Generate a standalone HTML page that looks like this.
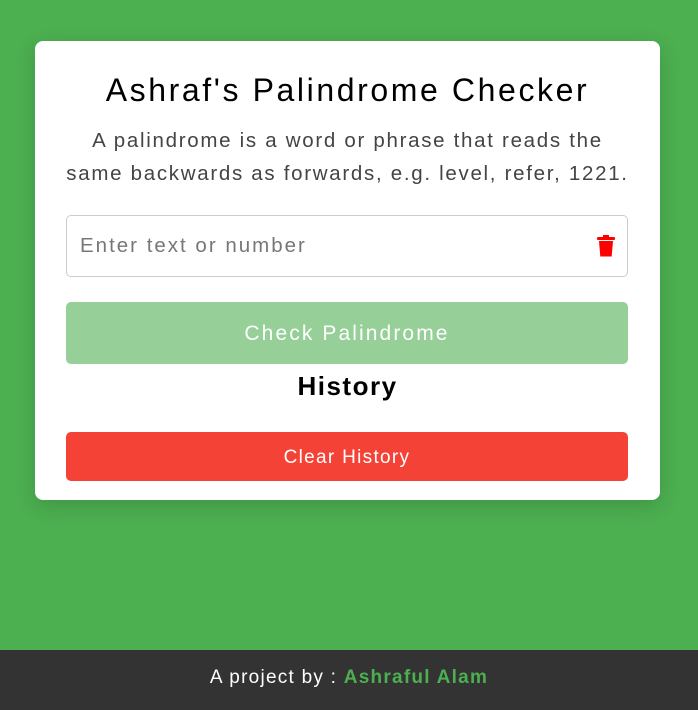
<!DOCTYPE html>
<html><head><style>
body{margin:0;width:698px;height:702px;background:#4caf50;font-family:"Liberation Sans",sans-serif;position:relative;overflow:hidden}
.card{position:absolute;left:35px;top:41px;width:625px;height:459px;background:#fff;border-radius:8px;box-shadow:0 6px 20px rgba(0,0,0,.15)}
h1{position:absolute;top:72px;left:35px;width:625px;margin:0;text-align:center;font-weight:normal;font-size:32px;color:#000;letter-spacing:2.6px}
p{position:absolute;top:124px;left:35px;width:625px;margin:0;text-align:center;font-size:20.5px;line-height:33px;color:#444;letter-spacing:1.7px}
.inp{position:absolute;left:66px;top:215px;width:560px;height:60px;border:1px solid #ccc;border-radius:5px}
.inp span{position:absolute;left:13px;top:18px;font-size:20.5px;color:#777;letter-spacing:2px}
.btn{position:absolute;left:66px;top:302px;width:562px;height:62px;background:#96cf98;border-radius:5px;color:#fff;font-size:21px;text-align:center;line-height:64px;letter-spacing:2.1px}
h2{position:absolute;top:371px;left:35px;width:625px;margin:0;text-align:center;font-size:26px;color:#000;letter-spacing:1.5px}
.clr{position:absolute;left:66px;top:432px;width:562px;height:49px;background:#f44336;border-radius:5px;color:#fff;font-size:19px;text-align:center;line-height:51px;letter-spacing:1.3px}
.foot{position:absolute;left:0;top:650px;width:698px;height:60px;background:#333;color:#fff;font-size:19px;text-align:center;line-height:56px;letter-spacing:1.25px}
.foot b{color:#4caf50}
</style></head><body>
<div class="card"></div>
<h1>Ashraf's Palindrome Checker</h1>
<p>A palindrome is a word or phrase that reads the<br>same backwards as forwards, e.g. level, refer, 1221.</p>
<div class="inp"><span>Enter text or number</span>
<svg style="position:absolute;left:529px;top:18px" width="20" height="24" viewBox="0 0 20 24"><rect x="1" y="3" width="18" height="3" rx="1" fill="#f00"/><rect x="7" y="1" width="6" height="3" fill="#f00"/><path d="M3 7h14l-1.3 15.5H4.3z" fill="#f00"/></svg></div>
<div class="btn">Check Palindrome</div>
<h2>History</h2>
<div class="clr">Clear History</div>
<div class="foot">A project by : <b>Ashraful Alam</b></div>
</body></html>
